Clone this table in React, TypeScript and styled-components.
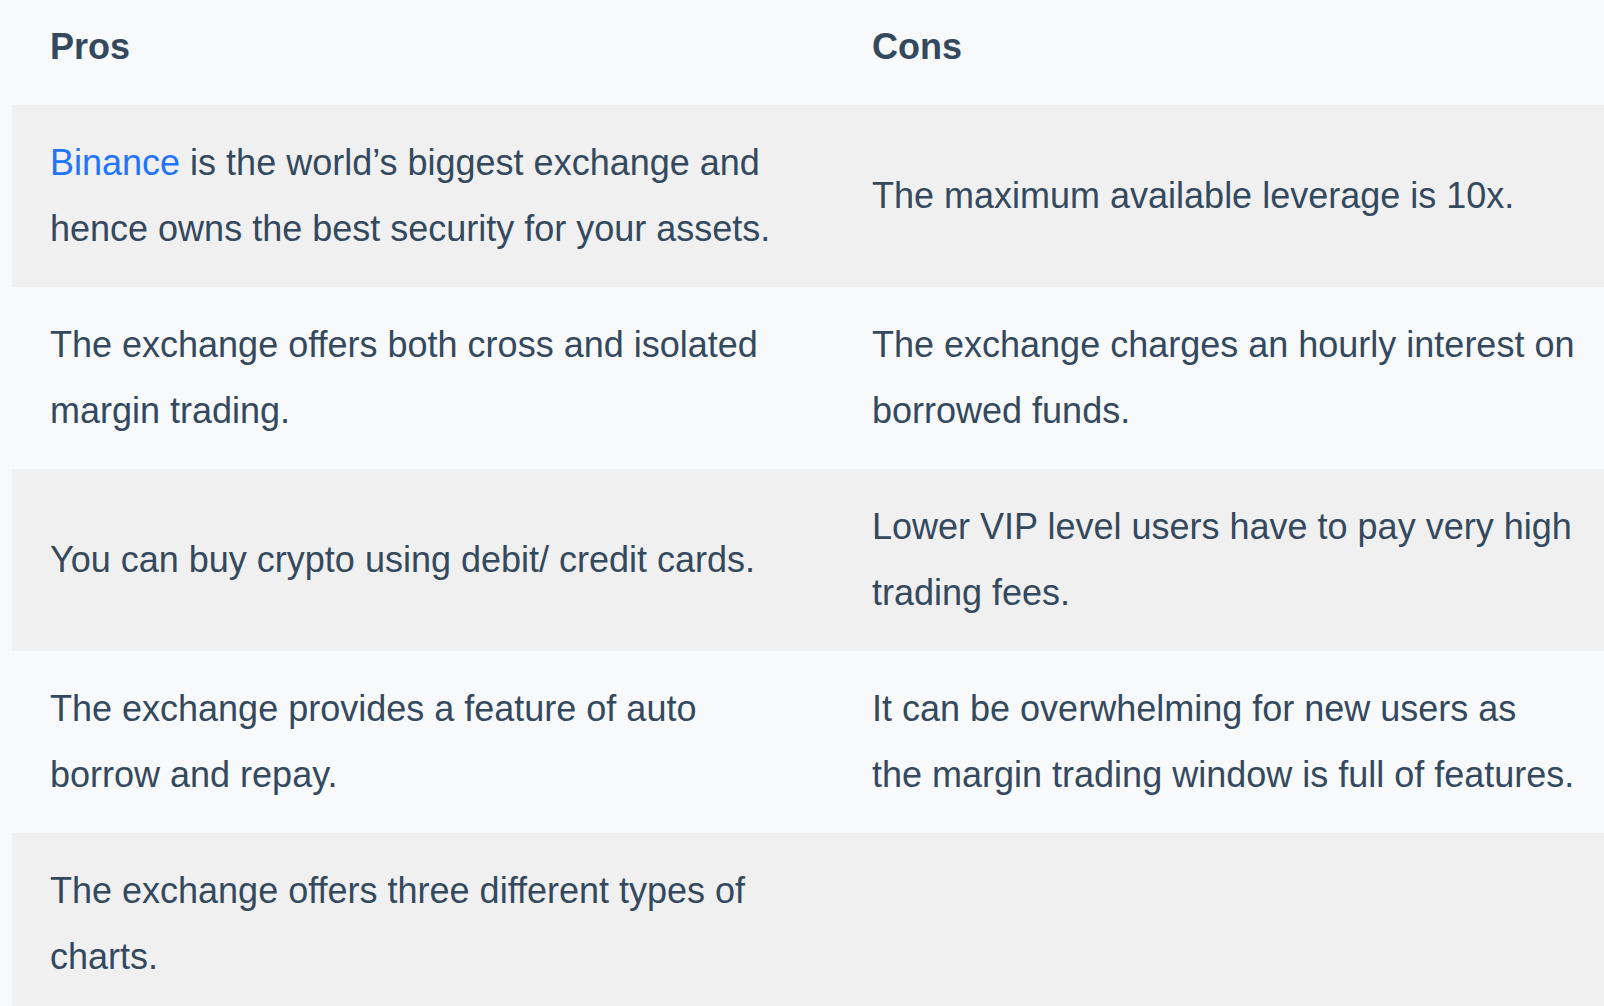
import styled, { createGlobalStyle } from "styled-components";

const GlobalStyle = createGlobalStyle`
  html, body {
    margin: 0;
    padding: 0;
    background: #f8f9fb;
    overflow: hidden;
  }
  body {
    font-family: "Liberation Sans", Arial, Helvetica, sans-serif;
    color: #34495e;
  }
`;

const Page = styled.div`
  width: 1604px;
  height: 1006px;
  overflow: hidden;
  padding-left: 12px;
  box-sizing: border-box;
`;

const Table = styled.table`
  width: 1601px;
  table-layout: fixed;
  border-collapse: collapse;
  font-size: 36px;
  line-height: 65.5px;
`;

const HeadCell = styled.th`
  text-align: left;
  font-weight: 700;
  padding: 14px 38px 25px;
  vertical-align: middle;
`;

const Row = styled.tr<{ $shaded?: boolean }>`
  background: ${(p) => (p.$shaded ? "#f0f0f0" : "transparent")};
`;

const Cell = styled.td`
  padding: 25.5px 38px;
  vertical-align: middle;
`;

const Link = styled.a`
  color: #2174fc;
  text-decoration: none;
`;

const rows: { pros: React.ReactNode; cons: string }[] = [
  {
    pros: (
      <>
        <Link href="#">Binance</Link> is the world’s biggest exchange and
        hence owns the best security for your assets.
      </>
    ),
    cons: "The maximum available leverage is 10x.",
  },
  {
    pros: "The exchange offers both cross and isolated margin trading.",
    cons: "The exchange charges an hourly interest on borrowed funds.",
  },
  {
    pros: "You can buy crypto using debit/ credit cards.",
    cons: "Lower VIP level users have to pay very high trading fees.",
  },
  {
    pros: "The exchange provides a feature of auto borrow and repay.",
    cons: "It can be overwhelming for new users as the margin trading window is full of features.",
  },
  {
    pros: "The exchange offers three different types of charts.",
    cons: "",
  },
];

const App = () => {
  return (
    <>
      <GlobalStyle />
      <Page>
        <Table>
          <colgroup>
            <col style={{ width: 822 }} />
            <col style={{ width: 779 }} />
          </colgroup>
          <thead>
            <tr>
              <HeadCell>Pros</HeadCell>
              <HeadCell>Cons</HeadCell>
            </tr>
          </thead>
          <tbody>
            {rows.map((row, i) => (
              <Row key={i} $shaded={i % 2 === 0}>
                <Cell>{row.pros}</Cell>
                <Cell>{row.cons}</Cell>
              </Row>
            ))}
          </tbody>
        </Table>
      </Page>
    </>
  );
};

export default App;
